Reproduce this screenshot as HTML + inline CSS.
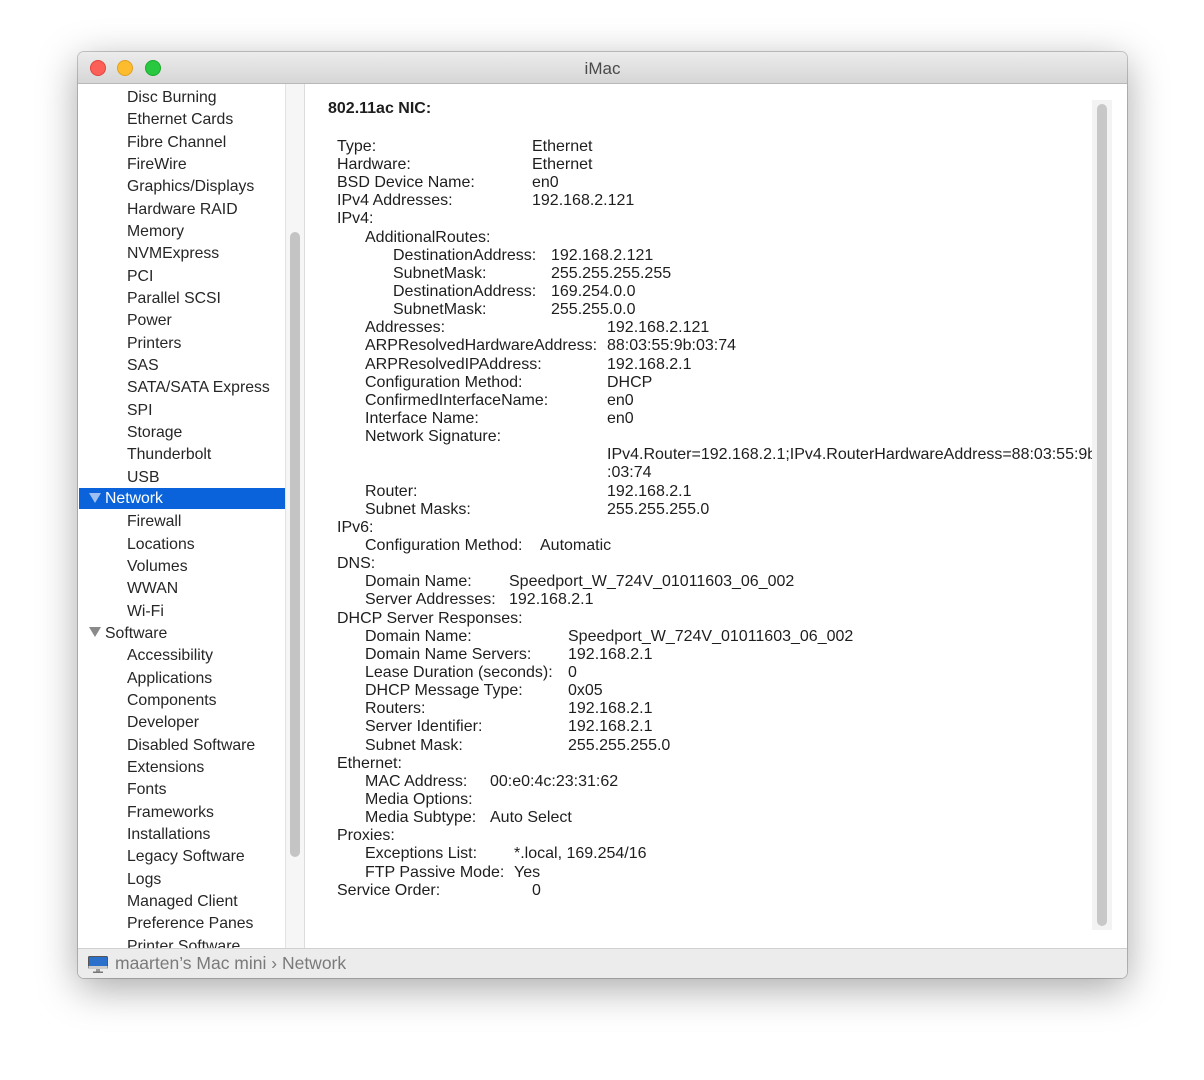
<!DOCTYPE html>
<html><head><meta charset="utf-8"><style>
*{margin:0;padding:0;box-sizing:border-box}
body{width:1204px;height:1080px;background:#fff;position:relative;overflow:hidden;font-family:"Liberation Sans",sans-serif;color:#1e1e1e}
.win{position:absolute;left:78px;top:52px;width:1049px;height:926px;border-radius:6px;background:#fff;box-shadow:0 10px 40px rgba(0,0,0,.35),0 0 0 1px rgba(0,0,0,.2);overflow:hidden}
.title{position:absolute;left:0;top:0;width:100%;height:32px;background:linear-gradient(#ececec,#d6d6d6);border-bottom:1px solid #b8b8b8;text-align:center;font-size:17px;line-height:34px;color:#4a4a4a}
.dot{position:absolute;top:8px;width:16px;height:16px;border-radius:50%}
.side{position:absolute;left:0;top:32px;width:208px;height:864px;background:#fff;border-right:1px solid #e2e2e2;overflow:hidden}
.sscroll{position:absolute;left:208px;top:32px;width:19px;height:864px;background:#f6f6f6;border-right:1px solid #dcdcdc}
.sthumb{position:absolute;left:4px;top:148px;width:10px;height:625px;background:#c4c4c4;border-radius:5px}
.si{position:absolute;left:49px;margin-top:1px;font-size:15.8px;line-height:20px;white-space:nowrap;color:#262626}
.sh{left:27px}
.tri{position:absolute;left:11px;width:0;height:0;border-left:6px solid transparent;border-right:6px solid transparent;border-top:10px solid #8a8a8a}
.sel{position:absolute;left:1px;top:404px;width:206px;height:21px;background:#0a63da}
.content{position:absolute;left:228px;top:32px;width:786px;height:864px;overflow:hidden}
.l{position:absolute;margin-top:1px;font-size:16px;line-height:18px;white-space:nowrap;color:#1e1e1e}
.cscroll{position:absolute;left:1014px;top:48px;width:20px;height:830px;background:#f3f3f3}
.cthumb{position:absolute;left:5px;top:4px;width:10px;height:822px;background:#c8c8c8;border-radius:5px}
.status{position:absolute;left:0;top:896px;width:100%;height:30px;background:#ececec;border-top:1px solid #d0d0d0;font-size:17.5px;line-height:29px;color:#7a7a7a}
</style></head><body>
<div class="win">
<div class="title">iMac
<div class="dot" style="left:12px;background:#fc5f57;border:1px solid #e0443e"></div>
<div class="dot" style="left:39px;background:#fdbc2e;border:1px solid #dfa022"></div>
<div class="dot" style="left:67px;background:#28c840;border:1px solid #1aab2b"></div>
</div>
<div class="side">
<div class="sel"></div>
<div class="si" style="top:3px">Disc Burning</div>
<div class="si" style="top:25px">Ethernet Cards</div>
<div class="si" style="top:48px">Fibre Channel</div>
<div class="si" style="top:70px">FireWire</div>
<div class="si" style="top:92px">Graphics/Displays</div>
<div class="si" style="top:115px">Hardware RAID</div>
<div class="si" style="top:137px">Memory</div>
<div class="si" style="top:159px">NVMExpress</div>
<div class="si" style="top:182px">PCI</div>
<div class="si" style="top:204px">Parallel SCSI</div>
<div class="si" style="top:226px">Power</div>
<div class="si" style="top:249px">Printers</div>
<div class="si" style="top:271px">SAS</div>
<div class="si" style="top:293px">SATA/SATA Express</div>
<div class="si" style="top:316px">SPI</div>
<div class="si" style="top:338px">Storage</div>
<div class="si" style="top:360px">Thunderbolt</div>
<div class="si" style="top:383px">USB</div>
<div class="tri" style="top:409px;border-top-color:#fff;opacity:.6"></div>
<div class="si sh" style="top:404px;color:#fff">Network</div>
<div class="si" style="top:427px">Firewall</div>
<div class="si" style="top:450px">Locations</div>
<div class="si" style="top:472px">Volumes</div>
<div class="si" style="top:494px">WWAN</div>
<div class="si" style="top:517px">Wi-Fi</div>
<div class="tri" style="top:543px"></div>
<div class="si sh" style="top:539px">Software</div>
<div class="si" style="top:561px">Accessibility</div>
<div class="si" style="top:584px">Applications</div>
<div class="si" style="top:606px">Components</div>
<div class="si" style="top:628px">Developer</div>
<div class="si" style="top:651px">Disabled Software</div>
<div class="si" style="top:673px">Extensions</div>
<div class="si" style="top:695px">Fonts</div>
<div class="si" style="top:718px">Frameworks</div>
<div class="si" style="top:740px">Installations</div>
<div class="si" style="top:762px">Legacy Software</div>
<div class="si" style="top:785px">Logs</div>
<div class="si" style="top:807px">Managed Client</div>
<div class="si" style="top:829px">Preference Panes</div>
<div class="si" style="top:852px">Printer Software</div>
</div>
<div class="sscroll"><div class="sthumb"></div></div>
<div class="content">
<div class="l" style="left:22px;top:15px;font-weight:bold">802.11ac NIC:</div>
<div class="l" style="left:31px;top:53px">Type:</div><div class="l" style="left:226px;top:53px">Ethernet</div>
<div class="l" style="left:31px;top:71px">Hardware:</div><div class="l" style="left:226px;top:71px">Ethernet</div>
<div class="l" style="left:31px;top:89px">BSD Device Name:</div><div class="l" style="left:226px;top:89px">en0</div>
<div class="l" style="left:31px;top:107px">IPv4 Addresses:</div><div class="l" style="left:226px;top:107px">192.168.2.121</div>
<div class="l" style="left:31px;top:125px">IPv4:</div>
<div class="l" style="left:59px;top:144px">AdditionalRoutes:</div>
<div class="l" style="left:87px;top:162px">DestinationAddress:</div><div class="l" style="left:245px;top:162px">192.168.2.121</div>
<div class="l" style="left:87px;top:180px">SubnetMask:</div><div class="l" style="left:245px;top:180px">255.255.255.255</div>
<div class="l" style="left:87px;top:198px">DestinationAddress:</div><div class="l" style="left:245px;top:198px">169.254.0.0</div>
<div class="l" style="left:87px;top:216px">SubnetMask:</div><div class="l" style="left:245px;top:216px">255.255.0.0</div>
<div class="l" style="left:59px;top:234px">Addresses:</div><div class="l" style="left:301px;top:234px">192.168.2.121</div>
<div class="l" style="left:59px;top:252px">ARPResolvedHardwareAddress:</div><div class="l" style="left:301px;top:252px">88:03:55:9b:03:74</div>
<div class="l" style="left:59px;top:271px">ARPResolvedIPAddress:</div><div class="l" style="left:301px;top:271px">192.168.2.1</div>
<div class="l" style="left:59px;top:289px">Configuration Method:</div><div class="l" style="left:301px;top:289px">DHCP</div>
<div class="l" style="left:59px;top:307px">ConfirmedInterfaceName:</div><div class="l" style="left:301px;top:307px">en0</div>
<div class="l" style="left:59px;top:325px">Interface Name:</div><div class="l" style="left:301px;top:325px">en0</div>
<div class="l" style="left:59px;top:343px">Network Signature:</div>
<div class="l" style="left:301px;top:361px">IPv4.Router=192.168.2.1;IPv4.RouterHardwareAddress=88:03:55:9b</div>
<div class="l" style="left:301px;top:379px">:03:74</div>
<div class="l" style="left:59px;top:398px">Router:</div><div class="l" style="left:301px;top:398px">192.168.2.1</div>
<div class="l" style="left:59px;top:416px">Subnet Masks:</div><div class="l" style="left:301px;top:416px">255.255.255.0</div>
<div class="l" style="left:31px;top:434px">IPv6:</div>
<div class="l" style="left:59px;top:452px">Configuration Method:</div><div class="l" style="left:234px;top:452px">Automatic</div>
<div class="l" style="left:31px;top:470px">DNS:</div>
<div class="l" style="left:59px;top:488px">Domain Name:</div><div class="l" style="left:203px;top:488px">Speedport_W_724V_01011603_06_002</div>
<div class="l" style="left:59px;top:506px">Server Addresses:</div><div class="l" style="left:203px;top:506px">192.168.2.1</div>
<div class="l" style="left:31px;top:525px">DHCP Server Responses:</div>
<div class="l" style="left:59px;top:543px">Domain Name:</div><div class="l" style="left:262px;top:543px">Speedport_W_724V_01011603_06_002</div>
<div class="l" style="left:59px;top:561px">Domain Name Servers:</div><div class="l" style="left:262px;top:561px">192.168.2.1</div>
<div class="l" style="left:59px;top:579px">Lease Duration (seconds):</div><div class="l" style="left:262px;top:579px">0</div>
<div class="l" style="left:59px;top:597px">DHCP Message Type:</div><div class="l" style="left:262px;top:597px">0x05</div>
<div class="l" style="left:59px;top:615px">Routers:</div><div class="l" style="left:262px;top:615px">192.168.2.1</div>
<div class="l" style="left:59px;top:633px">Server Identifier:</div><div class="l" style="left:262px;top:633px">192.168.2.1</div>
<div class="l" style="left:59px;top:652px">Subnet Mask:</div><div class="l" style="left:262px;top:652px">255.255.255.0</div>
<div class="l" style="left:31px;top:670px">Ethernet:</div>
<div class="l" style="left:59px;top:688px">MAC Address:</div><div class="l" style="left:184px;top:688px">00:e0:4c:23:31:62</div>
<div class="l" style="left:59px;top:706px">Media Options:</div>
<div class="l" style="left:59px;top:724px">Media Subtype:</div><div class="l" style="left:184px;top:724px">Auto Select</div>
<div class="l" style="left:31px;top:742px">Proxies:</div>
<div class="l" style="left:59px;top:760px">Exceptions List:</div><div class="l" style="left:208px;top:760px">*.local, 169.254/16</div>
<div class="l" style="left:59px;top:779px">FTP Passive Mode:</div><div class="l" style="left:208px;top:779px">Yes</div>
<div class="l" style="left:31px;top:797px">Service Order:</div><div class="l" style="left:226px;top:797px">0</div>
</div>
<div class="cscroll"><div class="cthumb"></div></div>
<div class="status">
<svg style="position:absolute;left:10px;top:7px" width="20" height="17" viewBox="0 0 20 17"><rect x="0.5" y="0.5" width="19" height="12" rx="1" fill="#2a6fc9" stroke="#555"/><rect x="0.5" y="10" width="19" height="3" fill="#ccc"/><rect x="8" y="13" width="4" height="3" fill="#999"/><rect x="5" y="15.5" width="10" height="1.5" fill="#777"/></svg>
<span style="position:absolute;left:37px;top:0">maarten’s Mac mini › Network</span>
</div>
</div>
</body></html>
